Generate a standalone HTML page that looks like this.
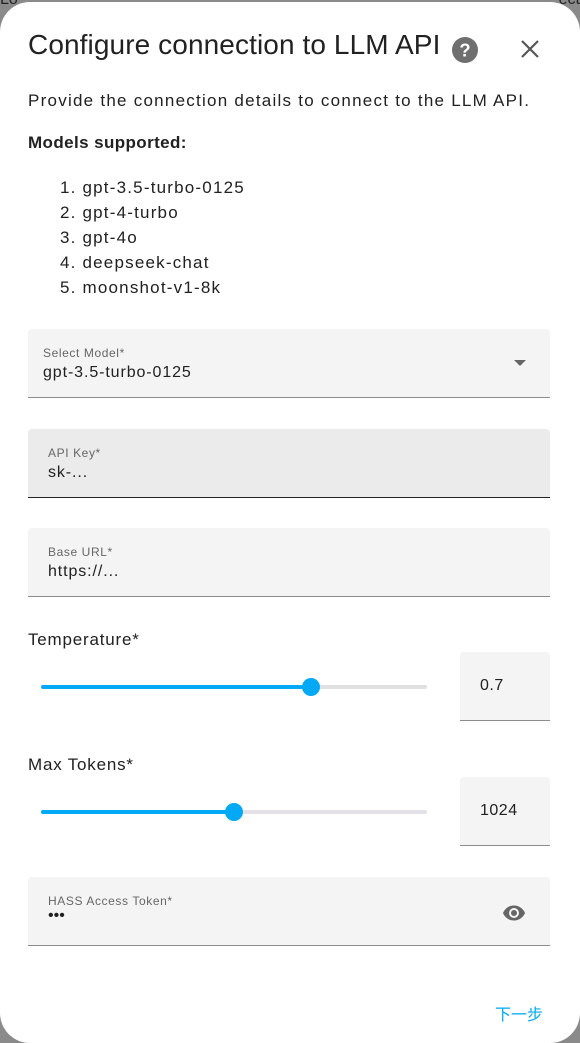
<!DOCTYPE html><html><head><style>
html,body{margin:0;width:580px;height:1043px;overflow:hidden}
body{background:#8a8a8a;font-family:"Liberation Sans","Roboto",sans-serif;position:relative;color:#212121}
.bgt{position:absolute;top:-9px;font-size:16px;color:#222}
.dlg{position:absolute;left:0;top:2px;width:580px;height:1041px;background:#fff;border-radius:30px}
.a{position:absolute}
.f{position:absolute;left:28px;width:522px;height:69px;background:#f4f4f4;border-radius:4px 4px 0 0;border-bottom:1px solid #8c8c8c;box-sizing:border-box}
.f .l{position:absolute;left:20px;top:17px;font-size:12px;color:#666;letter-spacing:.6px}
.f .v{position:absolute;left:20px;top:35px;font-size:16px;color:#212121;letter-spacing:.9px}
.nb{position:absolute;left:460px;width:90px;height:69px;background:#f4f4f4;border-radius:4px 4px 0 0;border-bottom:1px solid #8c8c8c;box-sizing:border-box;font-size:16px;padding:25px 0 0 20px;letter-spacing:.5px}
.tr{position:absolute;left:41px;width:386px;height:4px;background:#e0e0e0;border-radius:2px}
.tr i{position:absolute;left:0;top:0;height:4px;background:#03a9f4;border-radius:2px}
.tr b{position:absolute;top:-7px;width:18px;height:18px;margin-left:-9px;border-radius:50%;background:#03a9f4}
</style></head><body>
<div class="bgt" style="left:0">Lo</div><div class="bgt" style="right:0">ect</div>
<div class="dlg"></div>
<div class="a" style="left:28px;top:29px;font-size:28px;color:#212121;letter-spacing:.1px">Configure connection to LLM API</div>
<svg class="a" style="left:452px;top:37px" width="26" height="26" viewBox="0 0 24 24"><circle cx="12" cy="12" r="12" fill="#6f6f6f"/><text x="12" y="18" text-anchor="middle" font-size="17" font-weight="bold" fill="#fff" font-family="Liberation Sans">?</text></svg>
<svg class="a" style="left:519px;top:38px" width="22" height="22" viewBox="0 0 22 22"><path d="M3 3L19 19M19 3L3 19" stroke="#555" stroke-width="2.2"/></svg>
<div class="a" style="left:28px;top:91px;font-size:17px;letter-spacing:1.25px">Provide the connection details to connect to the LLM API.</div>
<div class="a" style="left:28px;top:133px;font-size:17px;font-weight:bold;letter-spacing:.4px">Models supported:</div>
<div class="a" style="left:60px;top:175px;font-size:17px;line-height:25px;letter-spacing:1.2px">1. gpt-3.5-turbo-0125<br>2. gpt-4-turbo<br>3. gpt-4o<br>4. deepseek-chat<br>5. moonshot-v1-8k</div>
<div class="f" style="top:329px"><div class="l" style="left:15px">Select Model*</div><div class="v" style="left:15px">gpt-3.5-turbo-0125</div>
<svg class="a" style="left:486px;top:31px" width="12" height="6"><path d="M0 0L12 0L6 6Z" fill="#666"/></svg></div>
<div class="f" style="top:429px;background:#ebebeb;border-bottom-color:#222"><div class="l">API Key*</div><div class="v">sk-...</div></div>
<div class="f" style="top:528px"><div class="l">Base URL*</div><div class="v">https://...</div></div>
<div class="a" style="left:28px;top:630px;font-size:17px;letter-spacing:.8px">Temperature*</div>
<div class="tr" style="top:685px"><i style="width:270px"></i><b style="left:270px"></b></div>
<div class="nb" style="top:652px">0.7</div>
<div class="a" style="left:28px;top:755px;font-size:17px;letter-spacing:.8px">Max Tokens*</div>
<div class="tr" style="top:810px;background:#e4e0e8"><i style="width:193px"></i><b style="left:193px"></b></div>
<div class="nb" style="top:777px">1024</div>
<div class="f" style="top:877px"><div class="l">HASS Access Token*</div><div class="v" style="top:30px;font-size:16px;letter-spacing:0">•••</div>
<svg class="a" style="left:474px;top:24px" width="24" height="24" viewBox="0 0 24 24"><path d="M12 4.5C7 4.5 2.7 7.6 1 12c1.7 4.4 6 7.5 11 7.5s9.3-3.1 11-7.5c-1.7-4.4-6-7.5-11-7.5zM12 17a5 5 0 110-10 5 5 0 010 10zm0-8a3 3 0 100 6 3 3 0 000-6z" fill="#666"/></svg></div>
<div class="a" style="left:495px;top:1001px;font-size:16px;color:#03a9f4;font-family:'Noto Sans CJK SC',sans-serif">下一步</div>
</body></html>
